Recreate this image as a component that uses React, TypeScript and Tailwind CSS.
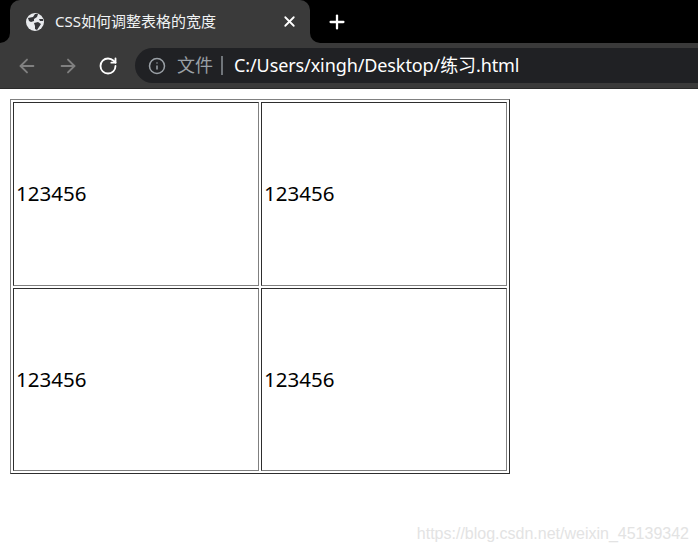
import { ArrowLeft, ArrowRight, RotateCw, Info, X, Plus } from 'lucide-react'

const cjk = { fontFamily: '"Noto Sans", "Noto Sans CJK SC", sans-serif' }

function Globe() {
  return (
    <svg width="18" height="18" viewBox="0 0 18 18" className="shrink-0">
      <circle cx="9" cy="9" r="9" fill="#e8eaed" />
      <path d="M2 5 L7 4 L9 1 L12 1 L11 4 L8 6 L8 8 L5 9 L3 8 Z" fill="#35363a" />
      <path d="M8 10 L12 9 L15 11 L13 14 L11 17 L9 16 L9 13 Z" fill="#35363a" />
      <path d="M13 6 L17 6 L17 8 L14 8 Z" fill="#35363a" />
    </svg>
  )
}

function Cell() {
  return (
    <td className="border border-t-[#2e2e2e] border-l-[#2e2e2e] border-r-[#808080] border-b-[#808080] pl-[2px] pr-[1px] pt-[2px] pb-[2px] text-[20.5px] text-black align-middle">
      123456
    </td>
  )
}

export default function App() {
  return (
    <div className="h-[549px] w-[698px] overflow-hidden bg-white flex flex-col" style={cjk}>
      <div className="h-[43px] bg-black flex items-end shrink-0">
        <div className="relative ml-[10px] h-[43px] w-[300px] rounded-t-[10px] bg-[#3a3a3a] flex items-center pl-[16px] pr-[12px]">
          {/* concave flares at the foot of the tab */}
          <div className="absolute -left-[10px] bottom-0 h-[10px] w-[10px] bg-[#3a3a3a]">
            <div className="h-full w-full rounded-br-[10px] bg-black" />
          </div>
          <div className="absolute -right-[10px] bottom-0 h-[10px] w-[10px] bg-[#3a3a3a]">
            <div className="h-full w-full rounded-bl-[10px] bg-black" />
          </div>
          <Globe />
          <span className="ml-[11px] text-[15px] text-[#f1f3f4] flex-1">CSS如何调整表格的宽度</span>
          <X size={17} strokeWidth={2.5} className="text-white" />
        </div>
        <Plus size={22} strokeWidth={2.5} className="ml-[16px] mb-[10px] text-white" />
      </div>
      <div className="h-[46px] bg-[#3a3a3a] border-b border-[#2a2a2a] flex items-center shrink-0 pl-[16px]">
        <ArrowLeft size={22} className="text-[#808080]" />
        <ArrowRight size={22} className="ml-[19px] text-[#808080]" />
        <RotateCw size={20} strokeWidth={2.2} className="ml-[19px] text-white" />
        <div className="ml-[17px] h-[35px] flex-1 rounded-l-[18px] bg-[#202124] flex items-center pl-[13px]">
          <Info size={18} className="text-[#9aa0a6]" />
          <span className="ml-[11px] text-[18px] text-[#9aa0a6]">文件</span>
          <span className="ml-[8px] w-[2px] h-[19px] bg-[#70757a]" />
          <span className="ml-[11px] text-[18px] tracking-[-0.1px] text-white">C:/Users/xingh/Desktop/练习.html</span>
        </div>
      </div>
      <div className="relative flex-1 pl-[10px] pt-[10px]">
        <table className="w-[500px] h-[375px] border-separate border-spacing-[2px] border border-t-[#808080] border-l-[#808080] border-r-[#2e2e2e] border-b-[#2e2e2e] table-fixed">
          <tbody>
            <tr><Cell /><Cell /></tr>
            <tr><Cell /><Cell /></tr>
          </tbody>
        </table>
        <span className="absolute right-[9px] bottom-[3px] text-[16px] text-[#e3e3e3]" style={{ fontFamily: '"Liberation Sans", sans-serif' }}>
          https://blog.csdn.net/weixin_45139342
        </span>
      </div>
    </div>
  )
}
